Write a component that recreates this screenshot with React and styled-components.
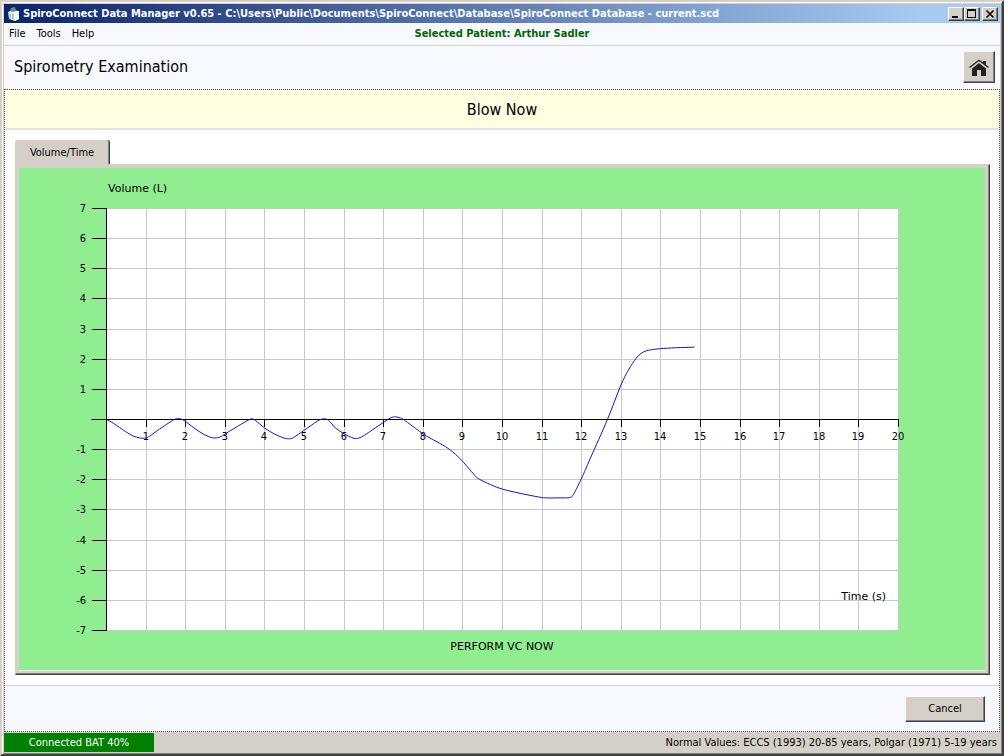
import React from 'react'
import styled, { createGlobalStyle, css } from 'styled-components'

const GlobalStyle = createGlobalStyle`
    *, *::before, *::after {
        box-sizing: border-box;
    }

    body {
        margin: 0;
        font-family: Tahoma, 'DejaVu Sans Condensed', 'Noto Sans', sans-serif;
        font-size: 11px;
        color: #000;
    }
`

const raised = css`
    border: 1px solid;
    border-color: #fff #404040 #404040 #fff;
    box-shadow: inset -1px -1px 0 #808080;
`

const Window = styled.div`
    min-height: 100vh;
    display: flex;
    flex-direction: column;
    padding: 2px;
    background: #d4d0c8;
    border: 2px solid;
    border-color: #d4d0c8 #404040 #404040 #d4d0c8;
    box-shadow: inset 1px 1px 0 #fff, inset -1px -1px 0 #808080;
`

const TitleBar = styled.header`
    height: 19px;
    display: flex;
    align-items: center;
    padding: 0 2px;
    background: linear-gradient(to right, #0a246a, #a6caf0 92%);
`

const Title = styled.h1`
    flex: 1;
    margin: 0 0 0 2px;
    color: #fff;
    font-size: 11px;
    font-weight: bold;
    white-space: nowrap;
`

const CaptionButton = styled.button`
    ${raised}
    width: 16px;
    height: 14px;
    padding: 0;
    margin-left: ${props => (props.$spaced ? 2 : 0)}px;
    background: #d4d0c8;

    svg {
        display: block;
    }
`

const MenuBar = styled.nav`
    height: 23px;
    display: grid;
    grid-template-columns: 1fr auto 1fr;
    align-items: center;
    padding: 0 5px 1px;
    background: #f8f8ff;
    border-bottom: 1px solid #d3d3d3;
`

const Menus = styled.div`
    display: flex;
    gap: 11px;
`

const MenuItem = styled.button`
    padding: 0;
    border: 0;
    background: none;
    font: inherit;
    color: inherit;
`

const Patient = styled.strong`
    color: #006400;
`

const PageHeader = styled.div`
    height: 43px;
    display: flex;
    align-items: center;
    justify-content: space-between;
    padding: 0 5px 2px 10px;
    background: #f8f8ff;
`

const PageTitle = styled.h2`
    margin: 0;
    font-size: 16px;
    font-weight: normal;
`

const HomeButton = styled.button`
    ${raised}
    width: 32px;
    height: 32px;
    padding: 0;
    display: grid;
    place-items: center;
    background: #d4d0c8;
`

const Content = styled.main`
    flex: 1;
    display: flex;
    flex-direction: column;
    border: 1px dotted #404040;
    background: #fff;
`

const Prompt = styled.div`
    height: 40px;
    display: grid;
    place-items: center;
    background: #ffffe1;
    border-bottom: 2px solid #e3e3e3;
    font-size: 16px;
`

const TabArea = styled.section`
    flex: 1;
    display: flex;
    flex-direction: column;
    align-items: flex-start;
    padding: 10px 9px 10px 10px;
`

const Tab = styled.button`
    height: 24px;
    width: 95px;
    padding: 0;
    border: 0;
    border-right: 1px solid #404040;
    border-radius: 2px 2px 0 0;
    box-shadow: inset -1px 0 0 #808080;
    background: #d4d0c8;
    font: inherit;
    color: inherit;
`

const TabPanel = styled.div`
    flex: 1;
    align-self: stretch;
    display: flex;
    padding: 3px 4px 4px 3px;
    background: #d4d0c8;
    ${raised}
    border-color: #d4d0c8 #404040 #404040 #d4d0c8;
`

const Chart = styled.svg`
    flex: 1;
    display: block;
    width: 100%;
    min-width: 0;
    background: #90ee90;
    box-shadow: 0 1px 0 #f0eee8;
    font-family: Tahoma, 'DejaVu Sans Condensed', 'Noto Sans', sans-serif;
    font-size: 11px;
`

const ChartLabel = styled.text`
    font-family: Verdana, 'DejaVu Sans', sans-serif;
`

const Footer = styled.footer`
    height: 46px;
    display: flex;
    align-items: center;
    justify-content: flex-end;
    padding: 0 14px 0 0;
    background: #f8f8ff;
    border-top: 1px solid #d3d3d3;
`

const CancelButton = styled.button`
    ${raised}
    width: 80px;
    height: 26px;
    background: #d4d0c8;
    font: inherit;
    color: inherit;
`

const StatusBar = styled.div`
    height: 20px;
    display: flex;
    align-items: center;
    justify-content: space-between;
    padding: 1px 3px 0 0;
`

const Connection = styled.div`
    align-self: stretch;
    width: 150px;
    display: grid;
    place-items: center;
    background: #008000;
    color: #fff;
`

const AppIcon = () => (
    <svg width="15" height="16" viewBox="0 0 15 16" aria-hidden="true">
        <path d="M2 6l4-2 7 1v8l-4 2-6-2z" fill="#dfe9ea" />
        <path d="M8 6l5-1v8l-4 2z" fill="#fff" />
        <path d="M4 5l1-3 4-1 1 4-3 1z" fill="#5d8f86" />
        <path d="M4 8v5M7 8v5" stroke="#8fa9b5" />
    </svg>
)

const HomeIcon = () => (
    <svg width="20" height="18" viewBox="0 0 20 18" aria-hidden="true">
        <path d="M14 3h3v5l-3-2z" fill="#231f20" />
        <path d="M3 10.5l7-5.5 7 5.5V18h-5v-6H8v6H3z" fill="#231f20" />
        <path d="M0.5 10.8l9.500-7.300 9.500 7.300" fill="none" stroke="#d4d0c8" strokeWidth="1.6" />
        <path d="M0.500 9.500l9.500-7.300 9.500 7.300" fill="none" stroke="#231f20" strokeWidth="1.3" />
    </svg>
)

// plot area inside the chart, in viewBox units
const LEFT = 87
const TOP = 40
const WIDTH = 792
const HEIGHT = 422
const ZERO = TOP + HEIGHT / 2

const toX = seconds => Math.round(LEFT + (seconds * WIDTH) / 20)
const toY = litres => Math.round(ZERO - (litres * HEIGHT) / 14)

// [seconds, litres]
const samples = [
    [0, 0], [0.18, -0.13], [0.48, -0.4], [0.68, -0.55], [0.83, -0.61], [0.96, -0.62],
    [1.06, -0.58], [1.24, -0.41], [1.67, -0.03], [1.79, 0.03], [1.9, 0.01], [2.05, -0.12],
    [2.25, -0.32], [2.47, -0.5], [2.65, -0.6], [2.78, -0.61], [2.9, -0.56], [3.08, -0.41],
    [3.54, -0.05], [3.66, 0.02], [3.76, -0.03], [3.99, -0.28], [4.24, -0.48], [4.47, -0.61],
    [4.6, -0.64], [4.72, -0.6], [5, -0.35], [5.33, -0.05], [5.48, 0.02], [5.61, -0.03],
    [5.78, -0.28], [6.01, -0.48], [6.19, -0.6], [6.31, -0.63], [6.44, -0.58], [6.62, -0.43],
    [6.99, -0.1], [7.17, 0.05], [7.3, 0.09], [7.42, 0.05], [7.5, 0], [8, -0.48],
    [8.26, -0.68], [8.56, -0.9], [8.81, -1.15], [9.02, -1.43], [9.27, -1.81], [9.39, -1.96],
    [9.7, -2.16], [10, -2.31], [10.45, -2.45], [10.91, -2.57], [11.09, -2.6], [11.46, -2.6],
    [11.69, -2.59], [11.79, -2.49], [12, -1.94], [12.22, -1.28], [12.65, 0], [12.98, 1.11],
    [13.18, 1.64], [13.38, 2.04], [13.56, 2.24], [13.74, 2.31], [13.99, 2.35], [14.37, 2.38],
    [14.85, 2.4],
]

const smoothPath = points => {
    const at = i => points[Math.max(0, Math.min(points.length - 1, i))]
    let d = `M${points[0].join(' ')}`
    for (let i = 0; i < points.length - 1; i++) {
        const [p0, p1, p2, p3] = [at(i - 1), at(i), at(i + 1), at(i + 2)]
        const c1 = [p1[0] + (p2[0] - p0[0]) / 6, p1[1] + (p2[1] - p0[1]) / 6]
        const c2 = [p2[0] - (p3[0] - p1[0]) / 6, p2[1] - (p3[1] - p1[1]) / 6]
        d += `C${c1.join(' ')} ${c2.join(' ')} ${p2.join(' ')}`
    }
    return d
}

const curve = smoothPath(
    samples.map(([s, l]) => [LEFT + (s * WIDTH) / 20 + 0.5, ZERO - (l * HEIGHT) / 14 + 0.5])
)

const seconds = Array.from({ length: 20 }, (_, i) => i + 1)
const litres = Array.from({ length: 15 }, (_, i) => 7 - i)

const VolumeTimeChart = () => (
    <Chart viewBox="0 0 966 502" role="img" aria-label="Volume/Time">
        <rect x={LEFT} y={TOP} width={WIDTH} height={HEIGHT} fill="#fff" />
        <g stroke="#c8c8c8" shapeRendering="crispEdges">
            {seconds.map(s => (
                <line key={s} x1={toX(s) + 0.5} x2={toX(s) + 0.5} y1={TOP} y2={TOP + HEIGHT} />
            ))}
            {litres.map(l => (
                <line key={l} x1={LEFT} x2={LEFT + WIDTH} y1={toY(l) + 0.5} y2={toY(l) + 0.5} />
            ))}
        </g>
        <g stroke="#000" shapeRendering="crispEdges">
            <line x1={LEFT + 0.5} x2={LEFT + 0.5} y1={TOP} y2={TOP + HEIGHT + 1} />
            <line x1={LEFT - 15} x2={LEFT + WIDTH} y1={ZERO + 0.5} y2={ZERO + 0.5} />
            {seconds.map(s => (
                <line key={s} x1={toX(s) + 0.5} x2={toX(s) + 0.5} y1={ZERO} y2={ZERO + 8} />
            ))}
            {litres.map(l => (
                <line key={l} x1={LEFT - 14} x2={LEFT} y1={toY(l) + 0.5} y2={toY(l) + 0.5} />
            ))}
        </g>
        {seconds.map(s => (
            <text key={s} x={toX(s)} y={ZERO + 21} textAnchor="middle">{s}</text>
        ))}
        {litres.filter(l => l !== 0).map(l => (
            <text key={l} x={LEFT - 20} y={toY(l) + 4} textAnchor="end">{l}</text>
        ))}
        <ChartLabel x="89" y="24">Volume (L)</ChartLabel>
        <ChartLabel x="867" y="432" textAnchor="end">Time (s)</ChartLabel>
        <ChartLabel x="483" y="482" textAnchor="middle">PERFORM VC NOW</ChartLabel>
        <path d={curve} fill="none" stroke="#1010d8" />
    </Chart>
)

const App = () => (
    <>
        <GlobalStyle />
        <Window>
            <TitleBar>
                <AppIcon />
                <Title>
                    {'SpiroConnect Data Manager v0.65 - C:\\Users\\Public\\Documents\\SpiroConnect\\Database\\SpiroConnect Database - current.scd'}
                </Title>
                <CaptionButton aria-label="Minimize">
                    <svg width="14" height="12"><path d="M3 8h6v2H3z" /></svg>
                </CaptionButton>
                <CaptionButton aria-label="Maximize">
                    <svg width="14" height="12">
                        <path d="M2 1h9v9H2zM3 3v6h7V3z" fillRule="evenodd" />
                    </svg>
                </CaptionButton>
                <CaptionButton aria-label="Close" $spaced>
                    <svg width="14" height="12">
                        <path d="M3.5 2.5l7 7M10.5 2.5l-7 7" stroke="#000" strokeWidth="1.6" />
                    </svg>
                </CaptionButton>
            </TitleBar>
            <MenuBar>
                <Menus>
                    <MenuItem>File</MenuItem>
                    <MenuItem>Tools</MenuItem>
                    <MenuItem>Help</MenuItem>
                </Menus>
                <Patient>Selected Patient: Arthur Sadler</Patient>
            </MenuBar>
            <PageHeader>
                <PageTitle>Spirometry Examination</PageTitle>
                <HomeButton aria-label="Home">
                    <HomeIcon />
                </HomeButton>
            </PageHeader>
            <Content>
                <Prompt>Blow Now</Prompt>
                <TabArea>
                    <Tab role="tab" aria-selected="true">Volume/Time</Tab>
                    <TabPanel role="tabpanel">
                        <VolumeTimeChart />
                    </TabPanel>
                </TabArea>
                <Footer>
                    <CancelButton>Cancel</CancelButton>
                </Footer>
            </Content>
            <StatusBar>
                <Connection>Connected BAT 40%</Connection>
                <span>Normal Values: ECCS (1993) 20-85 years, Polgar (1971) 5-19 years</span>
            </StatusBar>
        </Window>
    </>
)

export default App
